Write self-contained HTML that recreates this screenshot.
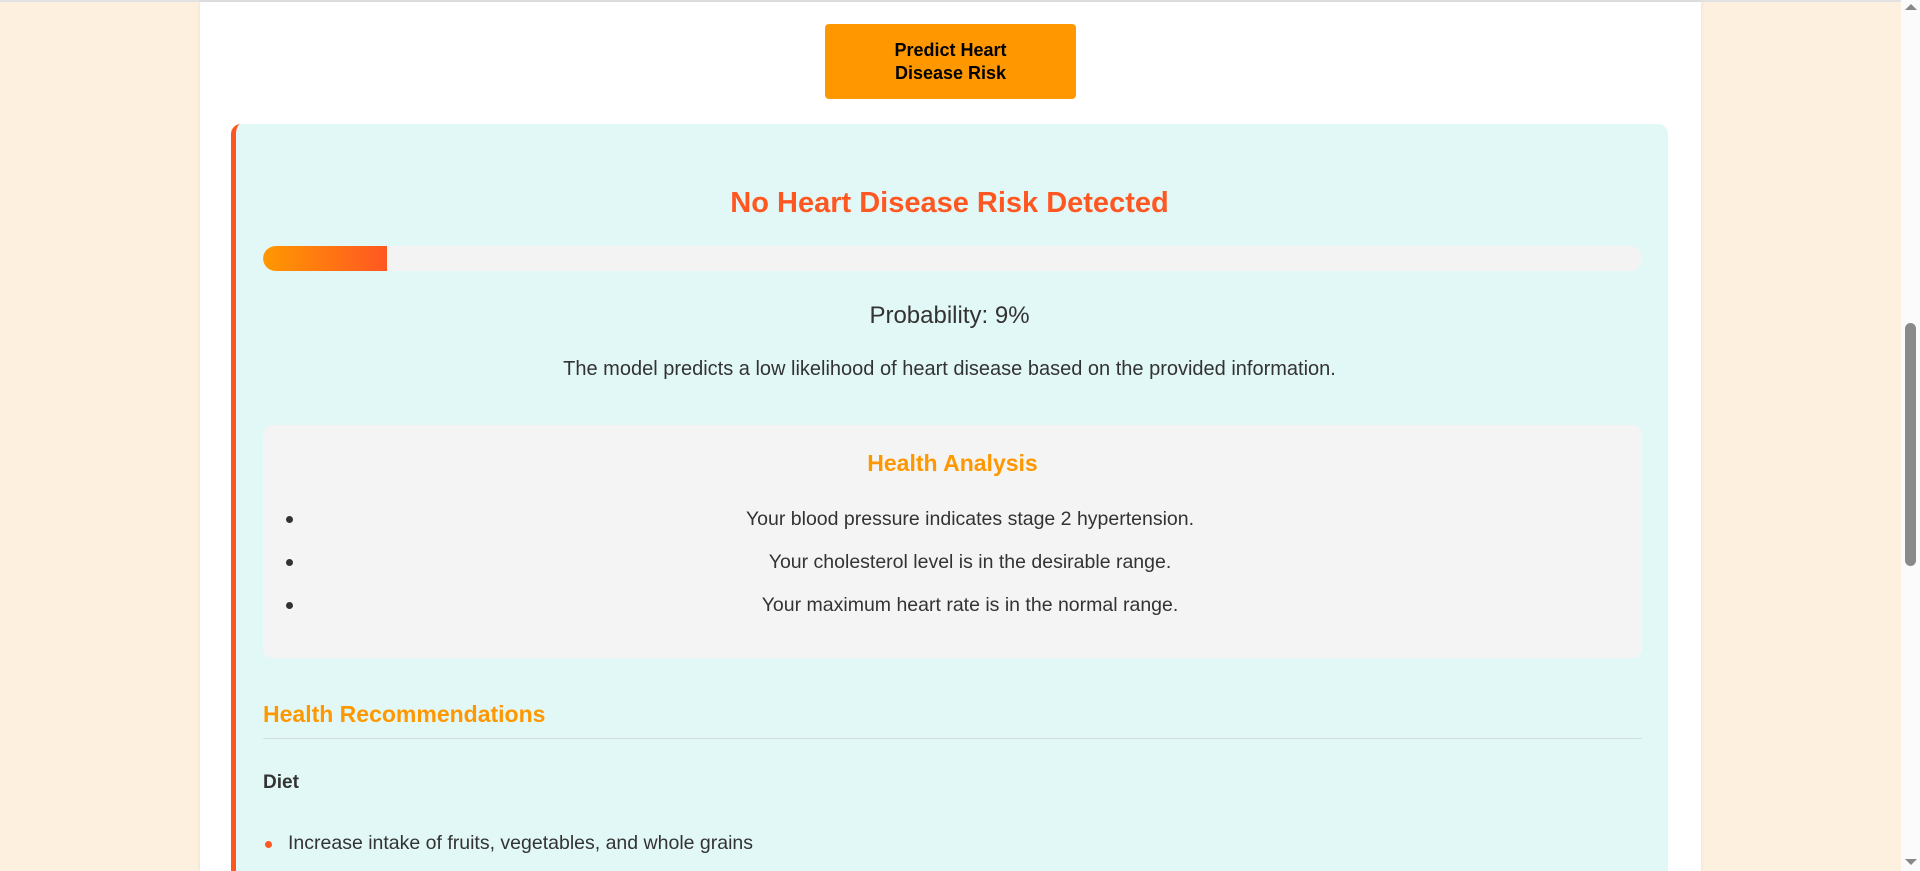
<!DOCTYPE html>
<html><head><meta charset="utf-8"><style>
*{margin:0;padding:0;box-sizing:border-box}
html,body{width:1920px;height:871px;overflow:hidden;background:#fdf0df;font-family:"Liberation Sans",sans-serif;color:#333}
#w{position:relative;width:1920px;height:871px;overflow:hidden}
.top{position:absolute;left:0;top:0;width:1901px;height:2px;background:#e2e2e2}
.card{position:absolute;left:200px;top:2px;width:1501px;height:869px;background:#fff;box-shadow:0 0 4px rgba(0,0,0,.08)}
.btn{position:absolute;left:825px;top:24px;width:251px;height:75px;background:#ff9800;border-radius:4px;color:#000;font-weight:bold;font-size:18px;line-height:23px;text-align:center;padding-top:15px}
.res{position:absolute;left:231px;top:124px;width:1437px;height:747px;background:#e2f8f6;border-left:5px solid #ff5722;border-radius:10px 10px 0 0}
.abs{position:absolute}
h2{position:absolute;left:231px;width:1437px;top:187px;text-align:center;color:#ff5722;font-size:29px}
.bar{left:263px;top:246px;width:1379px;height:25px;background:#f3f3f3;border-radius:13px;overflow:hidden}
.fill{position:absolute;left:0;top:0;width:124px;height:25px;background:linear-gradient(90deg,#ff9800,#ff5722);border-radius:13px 0 0 13px}
.c{left:231px;width:1437px;text-align:center}
.an{left:263px;top:425px;width:1379px;height:233px;background:#f4f4f4;border-radius:10px}
.dot{width:7px;height:7px;border-radius:50%;background:#333}
.li{left:300px;width:1340px;text-align:center;font-size:19.5px}
</style></head><body><div id="w">
<div class="top"></div>
<div class="card"></div>
<div class="btn">Predict Heart<br>Disease Risk</div>
<div class="res"></div>
<h2>No Heart Disease Risk Detected</h2>
<div class="abs bar"><div class="fill"></div></div>
<div class="abs c" style="top:302px;font-size:24px">Probability: 9%</div>
<div class="abs c" style="top:358px;font-size:20px">The model predicts a low likelihood of heart disease based on the provided information.</div>
<div class="abs an"></div>
<div class="abs" style="left:263px;width:1379px;top:450px;text-align:center;color:#ff9800;font-weight:bold;font-size:23px">Health Analysis</div>
<div class="abs dot" style="left:286px;top:516px"></div>
<div class="abs dot" style="left:286px;top:559px"></div>
<div class="abs dot" style="left:286px;top:602px"></div>
<div class="abs li" style="top:508px">Your blood pressure indicates stage 2 hypertension.</div>
<div class="abs li" style="top:551px">Your cholesterol level is in the desirable range.</div>
<div class="abs li" style="top:594px">Your maximum heart rate is in the normal range.</div>
<div class="abs" style="left:263px;top:701px;color:#ff9800;font-weight:bold;font-size:23px">Health Recommendations</div>
<div class="abs" style="left:263px;top:738px;width:1379px;height:1px;background:#d6dfe0"></div>
<div class="abs" style="left:263px;top:772px;font-weight:bold;font-size:19px">Diet</div>
<div class="abs" style="left:265px;top:841px;width:7px;height:7px;border-radius:50%;background:#ff5722"></div>
<div class="abs" style="left:288px;top:832px;font-size:19.5px">Increase intake of fruits, vegetables, and whole grains</div>
<div class="abs" style="left:1901px;top:0;width:19px;height:871px;background:#fbfbfb"></div>
<div class="abs" style="left:1905px;top:4px;width:0;height:0;border-left:6px solid transparent;border-right:6px solid transparent;border-bottom:6px solid #888"></div>
<div class="abs" style="left:1905px;top:859px;width:0;height:0;border-left:6px solid transparent;border-right:6px solid transparent;border-top:6px solid #888"></div>
<div class="abs" style="left:1905px;top:323px;width:11px;height:243px;border-radius:6px;background:#8a8a8a"></div>
</div></body></html>
